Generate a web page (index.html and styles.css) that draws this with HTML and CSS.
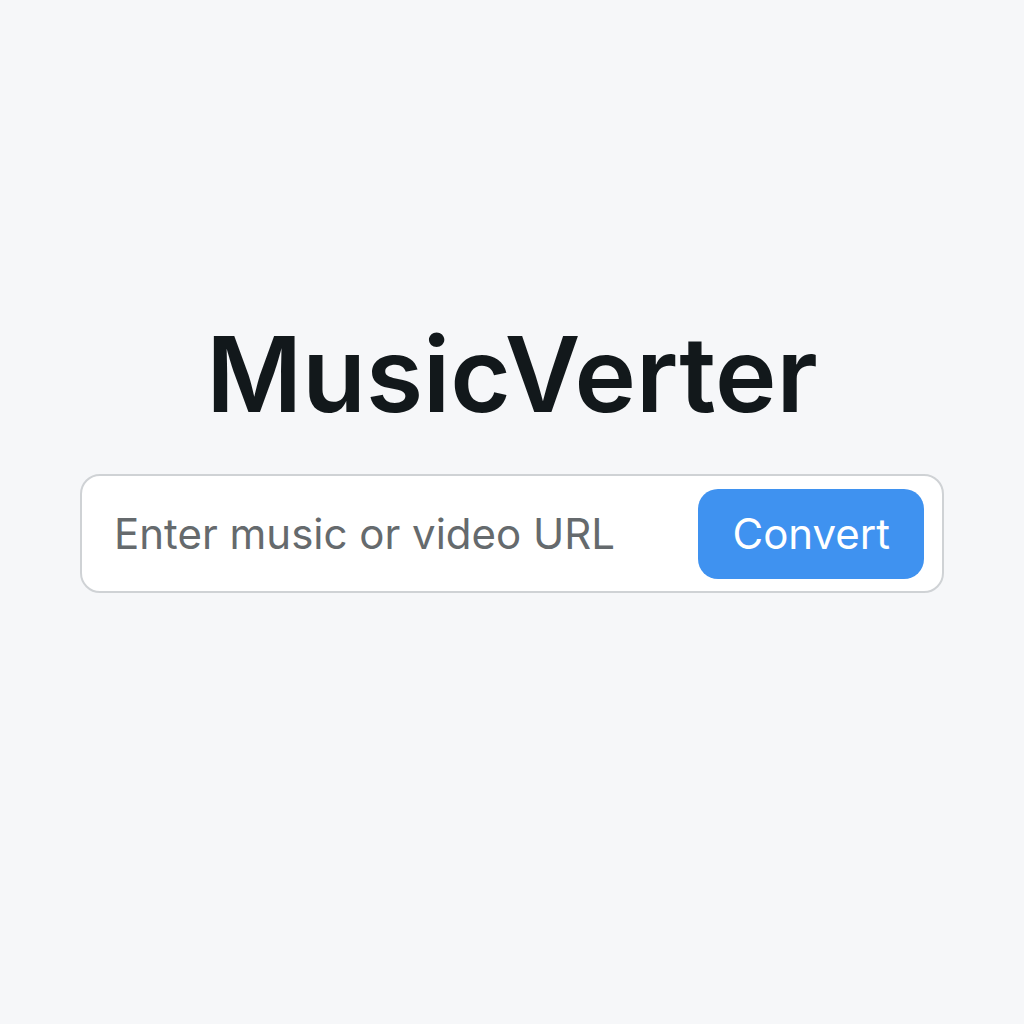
FILE: index.html
```html
<!DOCTYPE html>
<html lang="en">
<head>
  <meta charset="UTF-8">
  <meta name="viewport" content="width=device-width, initial-scale=1.0">
  <title>MusicVerter</title>
  <link rel="stylesheet" href="styles.css">
</head>
<body>
  <main class="container">
    <h1>MusicVerter</h1>
    <form class="convert-form">
      <input type="text" id="urlInput" aria-label="Music or video URL" placeholder="Enter music or video URL">
      <button type="submit" class="convert-btn">Convert</button>
    </form>
  </main>
</body>
</html>
```
FILE: styles.css
```css
* {
  box-sizing: border-box;
}
body {
  font-family: Inter, 'Liberation Sans', sans-serif;
  background: #f6f7f9;
  margin: 0;
  min-height: 100vh;
  display: flex;
  justify-content: center;
  align-items: center;
}
.container {
  width: 100%;
  padding: 0 80px 124px;
}
h1 {
  margin: 0 0 34px;
  font-size: 104px;
  line-height: 132px;
  font-weight: 600;
  color: #12181b;
  text-align: center;
}
.convert-form {
  display: flex;
  align-items: center;
  padding: 13px 18px 12px 32px;
  background: #fff;
  border: 2px solid #cfd2d5;
  border-radius: 20px;
}
.convert-form input {
  flex: 1;
  min-width: 0;
  padding: 0;
  border: none;
  outline: none;
  background: none;
  font-family: inherit;
  font-size: 42px;
  color: #12181b;
}
.convert-form input::placeholder {
  color: #656a6d;
  opacity: 1;
}
.convert-btn {
  height: 90px;
  padding: 0 34px;
  border: none;
  border-radius: 20px;
  background: #3f92f0;
  color: #fff;
  font-family: inherit;
  font-size: 42px;
  cursor: pointer;
}
```
